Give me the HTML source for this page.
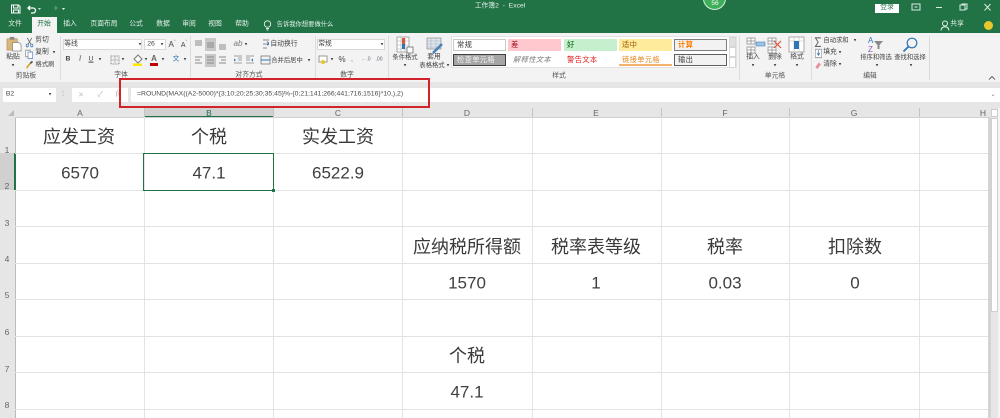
<!DOCTYPE html>
<html><head><meta charset="utf-8"><style>
html,body{margin:0;padding:0;width:1000px;height:418px;overflow:hidden;background:#fff}
body{font-family:"Liberation Sans","Noto Sans CJK SC",sans-serif}
#r{position:absolute;left:0;top:0;width:1000px;height:418px;overflow:hidden;filter:blur(.35px)}
#r div,#r svg{position:absolute}
.t{white-space:nowrap;transform:translate(-50%,-50%);font-size:6.8px;color:#444;line-height:1}
.w{color:#e6f0ea}
.l{color:#555}
.b{background:#e1e1e1}
.s{width:1px;top:36px;height:44px;background:#dcdcdc}
.c{font-size:18px;color:#3a3a3a;font-family:"Liberation Sans","Noto Sans CJK SC",sans-serif}
.n{font-size:17px;color:#3f3f3f}
.h{font-size:8.5px;color:#666}
.gv{top:117px;bottom:0;width:1px;background:#e3e3e3}
.gh{left:15px;width:973px;height:1px;background:#e3e3e3}
.st{font-size:7.300px;height:12px;width:53px;line-height:12px;padding-left:3px;box-sizing:border-box;letter-spacing:.3px}
</style></head><body><div id="r">

<div style="left:0;top:0;width:1000px;height:33px;background:#217346"></div>
<div style="left:0;top:33px;width:1000px;height:49px;background:#f3f3f3"></div>
<div style="left:0;top:82px;width:1000px;height:35px;background:#e6e6e6"></div>
<div style="left:32px;top:17px;width:25px;height:17px;background:#f3f3f3"></div>

<svg style="left:10px;top:3px" width="60" height="12" viewBox="0 0 60 12"><path d="M1.500 2h7l1.500 1.500v6.500h-8.500zM3.500 2v3h4.500v-3M3.500 10v-3h5v3" fill="none" stroke="#fff" stroke-width="1"/><path d="M20 3l-2 2 2 2M18 5h5a2.500 2.500 0 0 1 0 5h-2" fill="none" stroke="#fff" stroke-width="1.300"/><path d="M28 5h3l-1.500 2z" fill="#cde"/><path d="M52 5h3l-1.500 2z" fill="#fff"/><path d="M45 3l2 2-2 2M47 5h-3" stroke="#5d9a78" fill="none"/></svg>
<div class="t w" style="left:500px;top:7px">工作簿2&nbsp; -&nbsp; Excel</div>

<div style="left:703px;top:-13px;width:21px;height:21px;border-radius:50%;background:#3fae5a;border:1.500px solid #d8efe0"></div>
<div class="t" style="left:715px;top:4px;color:#fff;font-size:6.500px">56</div>
<div style="left:875px;top:4px;width:24px;height:9px;background:#fff"></div>
<div class="t" style="left:887px;top:8px;color:#217346">登录</div>
<svg style="left:910px;top:2px" width="90" height="11" viewBox="0 0 90 11"><rect x="2" y="2" width="8" height="6" fill="none" stroke="#dcebe3"/><path d="M4.500 5h3" stroke="#dcebe3"/><path d="M26 5.500h6" stroke="#dcebe3"/><rect x="50" y="3" width="5" height="5" fill="none" stroke="#dcebe3"/><path d="M52 3v-1h5v5h-2" fill="none" stroke="#dcebe3"/><path d="M74.500 2l6 6.500M80.500 2l-6 6.500" stroke="#dcebe3" stroke-width="1"/></svg>

<div class="t w" style="left:15px;top:25px">文件</div>
<div class="t" style="left:44px;top:25px;color:#217346">开始</div>
<div class="t w" style="left:70px;top:25px">插入</div>
<div class="t w" style="left:104px;top:25px">页面布局</div>
<div class="t w" style="left:136px;top:25px">公式</div>
<div class="t w" style="left:163px;top:25px">数据</div>
<div class="t w" style="left:189px;top:25px">审阅</div>
<div class="t w" style="left:215px;top:25px">视图</div>
<div class="t w" style="left:242px;top:25px">帮助</div>
<svg style="left:263px;top:20px" width="9" height="11" viewBox="0 0 9 11"><circle cx="4.500" cy="4" r="3.200" fill="none" stroke="#e6f0ea" stroke-width=".9"/><path d="M3 8.500h3M3.500 10h2" stroke="#e6f0ea" stroke-width=".9"/></svg>
<div class="t w" style="left:305px;top:25px;font-size:6.300px">告诉我你想要做什么</div>
<svg style="left:940px;top:20px" width="10" height="11" viewBox="0 0 10 11"><circle cx="5" cy="3.500" r="2.500" fill="none" stroke="#e6f0ea"/><path d="M1 10.500c0-5 8-5 8 0" fill="none" stroke="#e6f0ea"/></svg>
<div class="t w" style="left:957px;top:25px">共享</div>
<div style="left:984px;top:21px;width:9px;height:9px;border-radius:50%;background:#e8c62c"></div>

<svg style="left:6px;top:36px" width="16" height="16" viewBox="0 0 17 17"><rect x="1" y="3" width="11" height="12" fill="#d9b77c" stroke="#b29159" stroke-width=".7"/><rect x="4" y="1" width="5" height="3" fill="#8a8a8a"/><path d="M7 7h7l2 2v7h-9z" fill="#fff" stroke="#888" stroke-width=".8"/></svg>
<div class="t" style="left:13px;top:58px">粘贴</div>
<div class="t" style="left:13px;top:66px;font-size:5px">▾</div>
<svg style="left:25px;top:37px" width="9" height="32" viewBox="0 0 12 34" preserveAspectRatio="none"><path d="M3 1l5 7M9 1l-5 7" stroke="#666" fill="none"/><circle cx="3" cy="9" r="1.500" fill="none" stroke="#4a7ebb"/><circle cx="9" cy="9" r="1.500" fill="none" stroke="#4a7ebb"/><rect x="1" y="14" width="6" height="7" fill="#fff" stroke="#777" stroke-width=".8"/><rect x="4" y="16" width="6" height="7" fill="#fff" stroke="#4a7ebb" stroke-width=".8"/><path d="M2 33l5-5" stroke="#e0a030" stroke-width="2"/><path d="M7 28l3-2" stroke="#555" stroke-width="2"/></svg>
<div class="t" style="left:42px;top:41px">剪切</div>
<div class="t" style="left:42px;top:53px">复制</div>
<div class="t" style="left:54px;top:53px;font-size:5px">▾</div>
<div class="t" style="left:45px;top:65px;font-size:6.300px">格式刷</div>
<div class="t l" style="left:26px;top:77px">剪贴板</div>
<div class="s" style="left:60px"></div>

<div style="left:63px;top:39px;width:79px;height:11px;background:#fff;border:1px solid #d8d8d8;box-sizing:border-box"></div>
<div class="t" style="left:71px;top:45px">等线</div>
<div class="t" style="left:140px;top:45px;font-size:5px">▾</div>
<div style="left:144px;top:39px;width:22px;height:11px;background:#fff;border:1px solid #d8d8d8;box-sizing:border-box"></div>
<div class="t" style="left:151px;top:45px">26</div>
<div class="t" style="left:162px;top:45px;font-size:5px">▾</div>
<div class="t" style="left:172px;top:45px;font-size:8px">A<span style="font-size:5px;vertical-align:3px">ˆ</span></div>
<div class="t" style="left:184px;top:45px;font-size:7px">A<span style="font-size:5px;vertical-align:3px">ˇ</span></div>
<div class="t" style="left:68px;top:60px;font-weight:bold">B</div>
<div class="t" style="left:80px;top:60px;font-style:italic;font-family:'Liberation Serif',serif">I</div>
<div class="t" style="left:91px;top:60px;text-decoration:underline">U</div>
<div class="t" style="left:100px;top:60px;font-size:5px">▾</div>
<svg style="left:110px;top:55px" width="10" height="10" viewBox="0 0 10 10"><rect x="1" y="1" width="8" height="8" fill="none" stroke="#999" stroke-dasharray="1 .5"/><path d="M5 1v8M1 5h8" stroke="#bbb"/></svg>
<div class="t" style="left:123px;top:60px;font-size:5px">▾</div>
<svg style="left:132px;top:54px" width="12" height="12" viewBox="0 0 12 12"><path d="M6 1l4 4-4 4-4-4z" fill="#fff" stroke="#777"/><rect x="1" y="9.500" width="9" height="2.500" fill="#ffe800"/></svg>
<div class="t" style="left:146px;top:60px;font-size:5px">▾</div>
<div class="t" style="left:154px;top:59px;font-size:8px;font-weight:bold;color:#666">A</div>
<div style="left:150px;top:63px;width:8px;height:2.500px;background:#c00000"></div>
<div class="t" style="left:163px;top:60px;font-size:5px">▾</div>
<div class="t" style="left:176px;top:60px;color:#2e75b6">文</div>
<div class="t" style="left:185px;top:60px;font-size:5px">▾</div>
<div class="t l" style="left:121px;top:76px">字体</div>
<div class="s" style="left:190px"></div>

<div class="b" style="left:205px;top:38px;width:11px;height:13px;background:#c8c8c8"></div>
<div class="b" style="left:205px;top:54px;width:11px;height:13px;background:#c8c8c8"></div>
<svg style="left:194px;top:38px" width="34" height="30" viewBox="0 0 34 30"><path d="M1 3h7M1 5h7M1 7h7M13 5h7M13 7h7M13 9h7M25 9h7M25 11h7M25 7h7M1 19h7M1 22h5M1 25h7M13 19h7M13 22h7M13 25h7M25 19h7M27 22h5M25 25h7" stroke="#8a8a8a" stroke-width=".9"/></svg>
<div class="t" style="left:238px;top:44px;font-size:8px;color:#777;font-style:italic">ab</div>
<div class="t" style="left:246px;top:45px;font-size:5px">▾</div>
<svg style="left:233px;top:54px" width="22" height="12" viewBox="0 0 22 12"><path d="M1 2h8M5 4h4M5 6h4M1 9h8M13 2h8M13 4h4M13 6h4M13 9h8" stroke="#888" stroke-width=".8"/><path d="M1 4.500l2 1.500-2 1.500z" fill="#2e75b6"/><path d="M20 4.500l-2 1.500 2 1.500z" fill="#2e75b6"/></svg>
<svg style="left:261px;top:38px" width="9" height="12" viewBox="0 0 9 12"><path d="M2 2h6M2 6h6M2 10h4" stroke="#888"/><path d="M6 4c2 0 2 3 0 3" stroke="#2e75b6" fill="none"/></svg>
<div class="t" style="left:284px;top:45px">自动换行</div>
<svg style="left:260px;top:55px" width="11" height="10" viewBox="0 0 11 10"><rect x="1" y="1" width="9" height="8" fill="none" stroke="#777" stroke-width=".8"/><path d="M1 5h9" stroke="#2e75b6"/></svg>
<div class="t" style="left:287px;top:61px;font-size:6.300px">合并后居中</div>
<div class="t" style="left:309px;top:61px;font-size:5px">▾</div>
<div class="t l" style="left:249px;top:76px">对齐方式</div>
<div class="s" style="left:315px"></div>

<div style="left:317px;top:39px;width:68px;height:11px;background:#fff;border:1px solid #d8d8d8;box-sizing:border-box"></div>
<div class="t" style="left:325px;top:45px">常规</div>
<div class="t" style="left:382px;top:45px;font-size:5px">▾</div>
<svg style="left:318px;top:55px" width="10" height="10" viewBox="0 0 10 10"><rect x="1" y="1" width="8" height="6" fill="#fff" stroke="#999"/><circle cx="5" cy="7" r="2" fill="#e8c62c"/></svg>
<div class="t" style="left:332px;top:60px;font-size:5px">▾</div>
<div class="t" style="left:342px;top:60px;font-size:8px">%</div>
<div class="t" style="left:352px;top:60px;font-size:6px">,</div>
<div class="t" style="left:366px;top:60px;font-size:5px;color:#667">←.0</div>
<div class="t" style="left:379px;top:60px;font-size:5px;color:#667">.00</div>
<div class="t l" style="left:347px;top:76px">数字</div>
<div class="s" style="left:388px"></div>

<svg style="left:396px;top:36px" width="18" height="18" viewBox="0 0 18 18"><rect x="1" y="1" width="12" height="15" fill="#fff" stroke="#888" stroke-width=".7"/><path d="M5 1v15M9 1v15M1 5h12M1 9h12M1 13h12" stroke="#aaa" stroke-width=".6"/><rect x="6" y="2" width="3" height="6" fill="#d8543a"/><rect x="6" y="8" width="3" height="5" fill="#2e75b6"/><rect x="11" y="11" width="6" height="6" fill="#fff" stroke="#555" stroke-width=".7"/></svg>
<div class="t" style="left:405px;top:58px;font-size:6.300px">条件格式</div>
<div class="t" style="left:405px;top:66px;font-size:5px">▾</div>
<svg style="left:426px;top:37px" width="18" height="17" viewBox="0 0 18 17"><rect x="1" y="1" width="14" height="11" fill="#dfe7ef" stroke="#888" stroke-width=".7"/><path d="M1 4h14M1 7h14M1 10h14M5 1v11M10 1v11" stroke="#aab" stroke-width=".5"/><path d="M7 16l9-9" stroke="#4a7ebb" stroke-width="2.500"/></svg>
<div class="t" style="left:434px;top:58px">套用</div>
<div class="t" style="left:432px;top:66px;font-size:6.300px">表格格式</div>
<div class="t" style="left:448px;top:66px;font-size:5px">▾</div>

<div style="left:451px;top:36px;width:286px;height:32px;background:#fff;border:1px solid #e2e2e2;box-sizing:border-box"></div>
<div class="st" style="left:453px;top:39px;background:#fff;border:1px solid #c8c8c8;line-height:10px;color:#333">常规</div>
<div class="st" style="left:508px;top:39px;background:#ffc7ce;color:#9c0006">差</div>
<div class="st" style="left:564px;top:39px;background:#c6efce;color:#006100">好</div>
<div class="st" style="left:619px;top:39px;background:#ffeb9c;color:#9c5700">适中</div>
<div class="st" style="left:674px;top:39px;background:#f2f2f2;border:1px solid #7f7f7f;line-height:10px;color:#fa7d00;font-weight:bold">计算</div>
<div class="st" style="left:453px;top:54px;background:#a5a5a5;border:1.500px solid #3f3f3f;line-height:9px;color:#f4f4f4">检查单元格</div>
<div class="st" style="left:510px;top:54px;color:#7f7f7f;font-style:italic">解释性文本</div>
<div class="st" style="left:564px;top:54px;color:#e02020">警告文本</div>
<div class="st" style="left:619px;top:54px;color:#e08a1e;border-bottom:2px solid #f4b26b;line-height:11px">链接单元格</div>
<div class="st" style="left:674px;top:54px;background:#f2f2f2;border:1px solid #5f5f5f;line-height:10px;color:#3f3f3f">输出</div>
<div style="left:729px;top:37px;width:7px;height:10px;background:#e0e0e0;border:1px solid #d6d6d6;box-sizing:border-box"></div>
<div style="left:729px;top:47px;width:7px;height:10px;background:#fff;border:1px solid #d6d6d6;box-sizing:border-box"></div>
<div style="left:729px;top:57px;width:7px;height:11px;background:#fff;border:1px solid #d6d6d6;box-sizing:border-box"></div>
<div class="t l" style="left:559px;top:77px">样式</div>
<div class="s" style="left:739px"></div>

<svg style="left:745px;top:36px" width="62" height="18" viewBox="0 0 62 18"><path d="M2 2h8v6h-8zM6 2v6M2 5h8M2 11h8v6h-8zM6 11v6M2 14h8" fill="#fff" stroke="#888" stroke-width=".7"/><rect x="11" y="6" width="9" height="4" fill="#9cc3e6" stroke="#2e75b6" stroke-width=".5"/><path d="M23 2h8v6h-8zM27 2v6M23 5h8M23 11h8v6h-8zM27 11v6M23 14h8" fill="#fff" stroke="#888" stroke-width=".7"/><path d="M29 5l7 7M36 5l-7 7" stroke="#d8543a" stroke-width="1.200"/><rect x="44" y="1" width="15" height="15" fill="#fff" stroke="#888" stroke-width=".7"/><path d="M44 5h15M49 1v15M54 1v15" stroke="#bbb" stroke-width=".6"/><rect x="49" y="5" width="5" height="8" fill="#2e75b6"/></svg>
<div class="t" style="left:753px;top:58px">插入</div>
<div class="t" style="left:775px;top:58px">删除</div>
<div class="t" style="left:797px;top:58px">格式</div>
<div class="t" style="left:753px;top:66px;font-size:5px">▾</div>
<div class="t" style="left:775px;top:66px;font-size:5px">▾</div>
<div class="t" style="left:797px;top:66px;font-size:5px">▾</div>
<div class="t l" style="left:775px;top:77px">单元格</div>
<div class="s" style="left:811px"></div>

<svg style="left:814px;top:36px" width="9" height="34" viewBox="0 0 13 36" preserveAspectRatio="none"><path d="M10 2h-8l4 4.500-4 4.500h8" fill="none" stroke="#555" stroke-width="1.100"/><rect x="2" y="14" width="9" height="9" fill="#fff" stroke="#777" stroke-width=".7"/><path d="M6.500 15v5M4.500 18l2 2.500 2-2.500" stroke="#2e75b6" fill="none"/><path d="M2 33l5-5 3 2-5 5z" fill="#e88ea0"/></svg>
<div class="t" style="left:836px;top:41px;font-size:6.300px">自动求和</div>
<div class="t" style="left:855px;top:41px;font-size:5px">▾</div>
<div class="t" style="left:830px;top:53px">填充</div>
<div class="t" style="left:840px;top:53px;font-size:5px">▾</div>
<div class="t" style="left:830px;top:65px">清除</div>
<div class="t" style="left:840px;top:65px;font-size:5px">▾</div>
<svg style="left:868px;top:36px" width="60" height="18" viewBox="0 0 60 18"><text x="0" y="7" font-size="8" fill="#2e75b6" font-family="Liberation Sans">A</text><text x="0" y="16" font-size="8" fill="#8e5bb5" font-family="Liberation Sans">Z</text><path d="M6 5h9l-3.500 4v4h-2v-4z" fill="#888"/><circle cx="44" cy="7" r="4.800" fill="none" stroke="#2e75b6" stroke-width="1.200"/><path d="M40.500 10.500l-5 5" stroke="#2e75b6" stroke-width="1.800"/></svg>
<div class="t" style="left:876px;top:58px;font-size:6.300px">排序和筛选</div>
<div class="t" style="left:910px;top:58px;font-size:6.300px">查找和选择</div>
<div class="t" style="left:877px;top:66px;font-size:5px">▾</div>
<div class="t" style="left:911px;top:66px;font-size:5px">▾</div>
<div class="t l" style="left:870px;top:77px">编辑</div>
<div class="s" style="left:929px"></div>
<svg style="left:988px;top:75px" width="8" height="6" viewBox="0 0 8 6"><path d="M1 4.500l3-3 3 3" fill="none" stroke="#666"/></svg>

<div style="left:3px;top:88px;width:53px;height:14px;background:#fff"></div>
<div class="t" style="left:10px;top:95px;color:#444">B2</div>
<div class="t" style="left:50px;top:95px;font-size:5px">▾</div>
<div class="t" style="left:63px;top:95px;color:#aaa">⋮</div>
<div style="left:72px;top:88px;width:56px;height:14px;background:#fff"></div>
<div class="t" style="left:81px;top:95px;color:#bbb;font-size:9px">×</div>
<div class="t" style="left:100px;top:95px;color:#bbb;font-size:8px">✓</div>
<div class="t" style="left:118px;top:95px;color:#999;font-style:italic;font-family:'Liberation Serif',serif">f<span style="font-size:6px">x</span></div>
<div style="left:131px;top:88px;width:869px;height:14px;background:#fff"></div>
<div class="t" style="left:137px;top:95px;transform:translateY(-50%);font-size:6.850px;color:#4a4a4a">=ROUND(MAX((A2-5000)*{3;10;20;25;30;35;45}%-{0;21;141;266;441;716;1516}*10,),2)</div>
<div class="t" style="left:993px;top:95px;font-size:6px;color:#777">⌄</div>

<div style="left:0;top:107px;width:1000px;height:1px;background:#e6e6e6"></div>
<div style="left:144px;top:108px;width:129px;height:10px;background:#d0d0d0"></div>
<div style="left:144px;top:116px;width:129px;height:2px;background:#217346"></div>
<div style="left:0;top:117px;width:15px;height:301px;background:#e6e6e6"></div>
<div style="left:15px;top:117px;width:1px;height:301px;background:#bbb"></div>
<div style="left:15px;top:117px;width:973px;height:1px;background:#d0d0d0"></div>
<div style="left:0;top:153px;width:15px;height:37px;background:#d0d0d0"></div>
<div style="left:14px;top:153px;width:2px;height:37px;background:#217346"></div>
<svg style="left:8px;top:109px" width="6" height="7" viewBox="0 0 6 7"><path d="M0 7l6-6v6z" fill="#bbb"/></svg>
<div class="t h" style="left:80px;top:113px">A</div>
<div class="t h" style="left:209px;top:113px;color:#217346">B</div>
<div class="t h" style="left:338px;top:113px">C</div>
<div class="t h" style="left:467px;top:113px">D</div>
<div class="t h" style="left:596px;top:113px">E</div>
<div class="t h" style="left:725px;top:113px">F</div>
<div class="t h" style="left:854px;top:113px">G</div>
<div class="t h" style="left:983px;top:113px">H</div>
<div style="left:144px;top:108px;width:1px;height:9px;background:#c4c4c4"></div>
<div style="left:273px;top:108px;width:1px;height:9px;background:#c4c4c4"></div>
<div style="left:402px;top:108px;width:1px;height:9px;background:#c4c4c4"></div>
<div style="left:532px;top:108px;width:1px;height:9px;background:#c4c4c4"></div>
<div style="left:661px;top:108px;width:1px;height:9px;background:#c4c4c4"></div>
<div style="left:789px;top:108px;width:1px;height:9px;background:#c4c4c4"></div>
<div style="left:919px;top:108px;width:1px;height:9px;background:#c4c4c4"></div>

<div class="t h" style="left:7px;top:150px">1</div>
<div class="t h" style="left:7px;top:186px">2</div>
<div class="t h" style="left:7px;top:223px">3</div>
<div class="t h" style="left:7px;top:259px">4</div>
<div class="t h" style="left:7px;top:295px">5</div>
<div class="t h" style="left:7px;top:332px">6</div>
<div class="t h" style="left:7px;top:369px">7</div>
<div class="t h" style="left:7px;top:405px">8</div>

<div class="gv" style="left:144px"></div>
<div class="gv" style="left:273px"></div>
<div class="gv" style="left:402px"></div>
<div class="gv" style="left:532px"></div>
<div class="gv" style="left:661px"></div>
<div class="gv" style="left:789px"></div>
<div class="gv" style="left:919px"></div>
<div class="gh" style="top:153px"></div>
<div class="gh" style="top:190px"></div>
<div class="gh" style="top:226px"></div>
<div class="gh" style="top:263px"></div>
<div class="gh" style="top:299px"></div>
<div class="gh" style="top:336px"></div>
<div class="gh" style="top:372px"></div>
<div class="gh" style="top:409px"></div>

<div class="t c" style="left:79px;top:137px">应发工资</div>
<div class="t c" style="left:209px;top:137px">个税</div>
<div class="t c" style="left:338px;top:137px">实发工资</div>
<div class="t n" style="left:80px;top:173px">6570</div>
<div class="t n" style="left:209px;top:173px">47.1</div>
<div class="t n" style="left:338px;top:173px">6522.9</div>
<div class="t c" style="left:467px;top:247px">应纳税所得额</div>
<div class="t c" style="left:596px;top:247px">税率表等级</div>
<div class="t c" style="left:725px;top:247px">税率</div>
<div class="t c" style="left:855px;top:247px">扣除数</div>
<div class="t n" style="left:467px;top:283px">1570</div>
<div class="t n" style="left:596px;top:283px">1</div>
<div class="t n" style="left:725px;top:283px">0.03</div>
<div class="t n" style="left:855px;top:283px">0</div>
<div class="t c" style="left:467px;top:356px">个税</div>
<div class="t n" style="left:467px;top:392px">47.1</div>

<div style="left:143px;top:153px;width:131px;height:38px;border:1.500px solid #217346;box-sizing:border-box"></div>
<div style="left:272px;top:189px;width:3px;height:3px;background:#217346"></div>

<div style="left:988px;top:108px;width:12px;height:310px;background:#e6e6e6"></div>
<div style="left:988px;top:117px;width:3px;height:301px;background:#d4d4d4"></div>
<div style="left:991px;top:118px;width:7px;height:194px;background:#fff;border:1px solid #d0d0d0;box-sizing:border-box"></div>
<div style="left:998px;top:108px;width:2px;height:310px;background:#f4f4f4"></div>
<div style="left:991px;top:109px;width:7px;height:8px;background:#fff;border:1px solid #ccc;box-sizing:border-box"></div>

<div style="left:119px;top:78px;width:311px;height:30px;border:2px solid #d2232a;box-sizing:border-box"></div>
</div></body></html>
